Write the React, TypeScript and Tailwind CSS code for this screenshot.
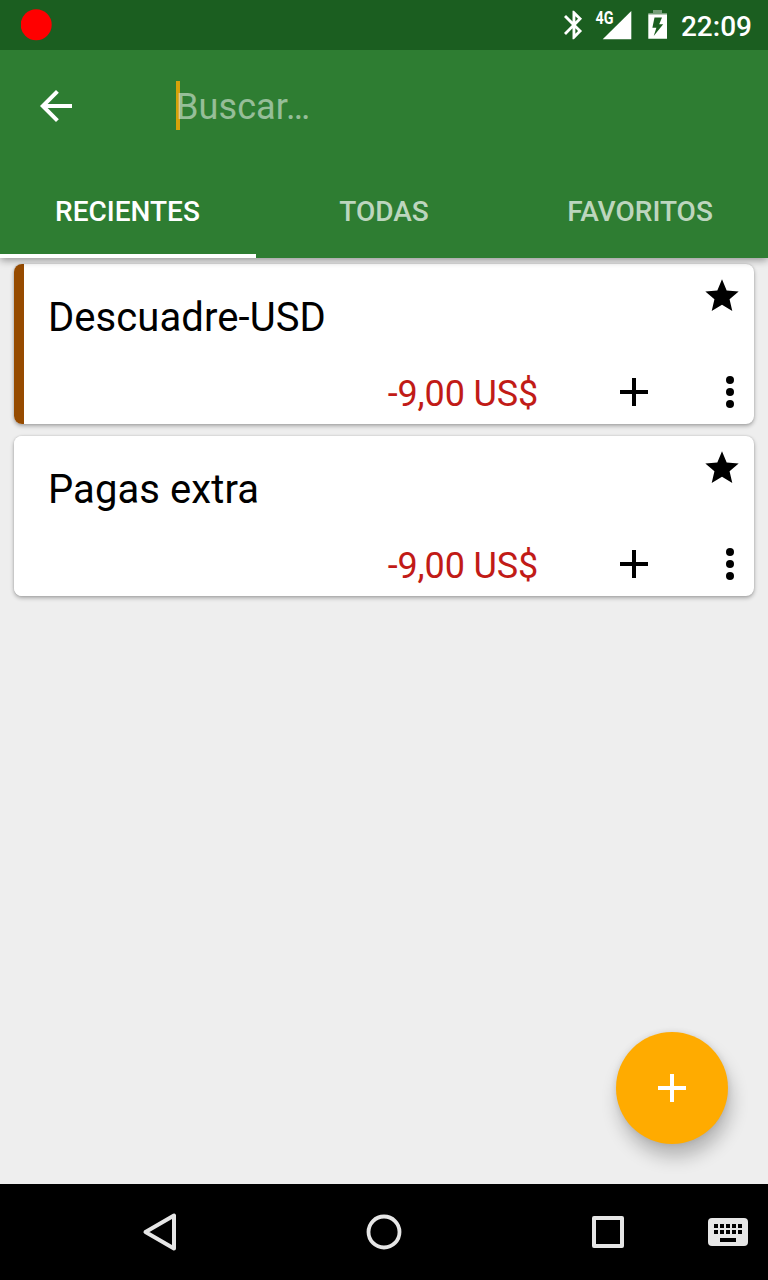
import type { ReactNode } from "react";

function StatusBar() {
  return (
    <div className="z-20 flex h-[50px] shrink-0 items-center bg-[#1b5e20] pr-4 pl-[21px]">
      <svg className="shrink-0" width="31" height="50" viewBox="0 0 31 50">
        <circle cx="15.200" cy="24.800" r="15.500" fill="#ff0000" />
      </svg>
      <svg className="ml-auto shrink-0" width="124" height="50" viewBox="557 0 124 50" fill="#fff">
        <path
          transform="translate(556.900 7.900) scale(1.420)"
          d="M17.710 7.710L12 2h-1v7.590L6.410 5 5 6.410 10.590 12 5 17.590 6.410 19 11 14.410V22h1l5.710-5.710-4.300-4.290 4.300-4.290zM13 5.830l1.880 1.880L13 9.590V5.830zm1.880 10.460L13 18.170v-3.760l1.880 1.880z"
        />
        <path d="M631.300 11V39.300H602.700z" />
        <text x="595.500" y="23.700" fontSize="17.500" fontWeight="700" fontFamily="Roboto, sans-serif" textLength="18" lengthAdjust="spacingAndGlyphs">
          4G
        </text>
        <path fillOpacity=".4" d="M653 10h9v3h5v2h-18.700v-2H653z" />
        <path fillRule="evenodd" d="M648.300 14.500H667V38.800H648.300zM654.500 17.500L652.400 27.700H656.400L653.700 36L663.200 24.300H659.200L662 17.500z" />
      </svg>
      <span className="pt-[3px] text-[28px] leading-[47px] font-medium text-white">22:09</span>
    </div>
  );
}

function Tab({ children, active = false }: { children: ReactNode; active?: boolean }) {
  return (
    <div
      className={
        active
          ? "flex w-64 items-center justify-center border-b-4 border-white pt-2 pr-px text-white"
          : "flex w-64 items-center justify-center border-b-4 border-transparent pt-2 text-white/70"
      }
    >
      {children}
    </div>
  );
}

function Header() {
  return (
    <header className="z-10 h-[208px] shrink-0 bg-[#2e7d32] shadow-[0_2px_8px_rgba(0,0,0,0.4)]">
      <div className="flex h-28 items-center pl-8">
        <svg width="48" height="48" viewBox="0 0 24 24" fill="#fff">
          <path d="M20 11H7.830l5.590-5.590L12 4l-8 8 8 8 1.410-1.410L7.830 13H20v-2z" />
        </svg>
        <div className="mb-[2px] ml-24 h-[49px] w-1 bg-[#ffab00]/80" />
        <span className="-ml-1 pt-[2px] text-[36px] leading-[42px] tracking-[0.1px] text-white/50">Buscar…</span>
      </div>
      <nav className="flex h-24 text-[28px] font-medium">
        <Tab active>RECIENTES</Tab>
        <Tab>TODAS</Tab>
        <Tab>FAVORITOS</Tab>
      </nav>
    </header>
  );
}

function AccountCard({ name, balance, stripe }: { name: string; balance: string; stripe: string }) {
  return (
    <article className="flex h-40 overflow-hidden rounded-[8px] bg-white shadow-[0_2px_4px_rgba(0,0,0,0.3),0_0_2px_rgba(0,0,0,0.16)]">
      <div className={`w-[10px] shrink-0 ${stripe}`} />
      <div className="flex flex-1 flex-col">
        <div className="flex h-24 justify-between pr-3 pl-6">
          <h2 className="pt-[30px] text-[40px] leading-[48px] tracking-[0.08px] text-black">{name}</h2>
          <svg className="mt-3" width="40" height="40" viewBox="0 0 24 24">
            <path d="M12 17.270L18.180 21l-1.640-7.030L22 9.240l-7.190-.610L12 2 9.190 8.630 2 9.240l5.460 4.730L5.820 21z" />
          </svg>
        </div>
        <div className="flex h-16 items-center justify-end">
          <span className="pt-[3px] text-[36px] leading-[42px] tracking-[-0.15px] text-[#c11b17]">{balance}</span>
          <svg className="ml-[72px]" width="48" height="48" viewBox="0 0 24 24">
            <path d="M19 13h-6v6h-2v-6H5v-2h6V5h2v6h6v2z" />
          </svg>
          <svg className="ml-12" width="48" height="48" viewBox="0 0 24 24">
            <circle cx="12" cy="6" r="2" />
            <circle cx="12" cy="12" r="2" />
            <circle cx="12" cy="18" r="2" />
          </svg>
        </div>
      </div>
    </article>
  );
}

function NavigationBar() {
  return (
    <footer className="flex h-24 shrink-0 items-center bg-black pl-[136px]">
      <svg width="48" height="48" fill="none" stroke="#e6e6e6" strokeWidth="4" strokeLinejoin="round">
        <path d="M38 7.500V40.500L9.500 24z" />
      </svg>
      <svg className="ml-[176px]" width="48" height="48" fill="none" stroke="#e6e6e6" strokeWidth="3.800">
        <circle cx="24" cy="24" r="15.500" />
      </svg>
      <svg className="ml-[176px]" width="48" height="48" fill="none" stroke="#e6e6e6" strokeWidth="4" strokeLinejoin="round">
        <path d="M10 10H38V38H10z" />
      </svg>
      <svg className="ml-[76px]" width="40" height="28" viewBox="0 0 40 28">
        <rect width="40" height="28" rx="4" fill="#e6e6e6" />
        <path d="M6 6h4v4H6zM12 6h4v4h-4zM18 6h4v4h-4zM24 6h4v4h-4zM30 6h4v4h-4zM6 12h4v4H6zM12 12h4v4h-4zM18 12h4v4h-4zM24 12h4v4h-4zM30 12h4v4h-4zM12 20h16v4H12z" />
      </svg>
    </footer>
  );
}

export default function App() {
  return (
    <div className="flex h-[1280px] w-[768px] flex-col overflow-hidden bg-[#eeeeee] font-[Roboto,sans-serif]">
      <StatusBar />
      <Header />
      <main className="relative flex flex-1 flex-col gap-3 px-[14px] pt-[6px]">
        <AccountCard name="Descuadre-USD" balance="-9,00 US$" stripe="bg-[#964b00]" />
        <AccountCard name="Pagas extra" balance="-9,00 US$" stripe="bg-white" />
        <button className="absolute right-10 bottom-10 flex h-28 w-28 items-center justify-center rounded-full bg-[#ffab00] shadow-[3px_13px_18px_rgba(0,0,0,0.24),0_0_6px_rgba(0,0,0,0.1)]">
          <svg width="48" height="48" viewBox="0 0 24 24" fill="#fff">
            <path d="M19 13h-6v6h-2v-6H5v-2h6V5h2v6h6v2z" />
          </svg>
        </button>
      </main>
      <NavigationBar />
    </div>
  );
}
